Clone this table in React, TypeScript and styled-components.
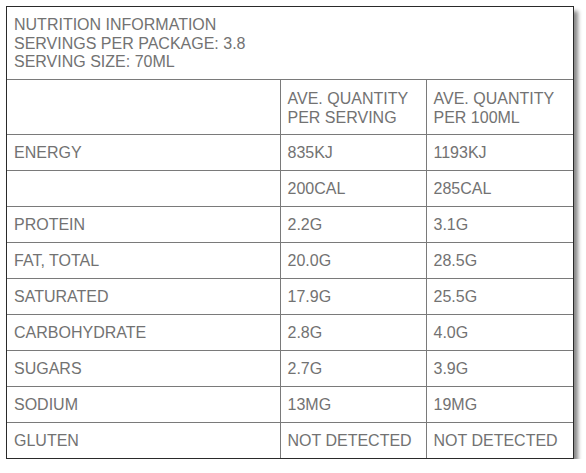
import styled, { createGlobalStyle } from "styled-components";

const GlobalStyle = createGlobalStyle`
  body {
    margin: 0;
    background: #ffffff;
    font-family: "Liberation Sans", Arial, sans-serif;
  }
`;

const rows = [
  { name: "ENERGY", serving: "835KJ", per100: "1193KJ" },
  { name: "", serving: "200CAL", per100: "285CAL" },
  { name: "PROTEIN", serving: "2.2G", per100: "3.1G" },
  { name: "FAT, TOTAL", serving: "20.0G", per100: "28.5G" },
  { name: "SATURATED", serving: "17.9G", per100: "25.5G" },
  { name: "CARBOHYDRATE", serving: "2.8G", per100: "4.0G" },
  { name: "SUGARS", serving: "2.7G", per100: "3.9G" },
  { name: "SODIUM", serving: "13MG", per100: "19MG" },
  { name: "GLUTEN", serving: "NOT DETECTED", per100: "NOT DETECTED" },
];

function App() {
  return (
    <>
      <GlobalStyle />
      <Page>
        <Panel>
          <Intro>
            NUTRITION INFORMATION
            <br />
            SERVINGS PER PACKAGE: 3.8
            <br />
            SERVING SIZE: 70ML
          </Intro>
          <Table>
            <colgroup>
              <col style={{ width: "273px" }} />
              <col style={{ width: "146px" }} />
              <col />
            </colgroup>
            <thead>
              <tr>
                <HeadCell />
                <HeadCell>
                  AVE. QUANTITY
                  <br />
                  PER SERVING
                </HeadCell>
                <HeadCell>
                  AVE. QUANTITY
                  <br />
                  PER 100ML
                </HeadCell>
              </tr>
            </thead>
            <tbody>
              {rows.map((r, i) => (
                <tr key={i}>
                  <Cell>{r.name}</Cell>
                  <Cell>{r.serving}</Cell>
                  <Cell>{r.per100}</Cell>
                </tr>
              ))}
            </tbody>
          </Table>
        </Panel>
      </Page>
    </>
  );
}

const Page = styled.div`
  padding: 6px 0 0 6px;
`;

const Panel = styled.div`
  width: 566px;
  border: 1px solid #2a2a2a;
  background: #ffffff;
  box-shadow: 4px 5px 4px #8a8a8a;
`;

const Intro = styled.div`
  height: 73px;
  box-sizing: border-box;
  padding: 9px 7px 0 7px;
  font-size: 16px;
  line-height: 18.5px;
  color: #727272;
  border-bottom: 1px solid #7a7a7a;
`;

const Table = styled.table`
  width: 100%;
  border-collapse: collapse;
  table-layout: fixed;
  font-size: 16px;
  color: #727272;
`;

const HeadCell = styled.th`
  height: 54px;
  box-sizing: border-box;
  padding: 10px 7px 0 7px;
  text-align: left;
  vertical-align: top;
  font-weight: normal;
  line-height: 18.5px;
  border-left: 1px solid #7a7a7a;
  border-bottom: 1px solid #7a7a7a;

  &:first-child {
    border-left: none;
  }
`;

const Cell = styled.td`
  height: 36px;
  box-sizing: border-box;
  padding: 1px 7px 0 7px;
  line-height: 19px;
  vertical-align: middle;
  border-left: 1px solid #7a7a7a;
  border-bottom: 1px solid #7a7a7a;
  white-space: nowrap;

  &:first-child {
    border-left: none;
  }

  tr:last-child > & {
    border-bottom: none;
  }
`;

export default App;
